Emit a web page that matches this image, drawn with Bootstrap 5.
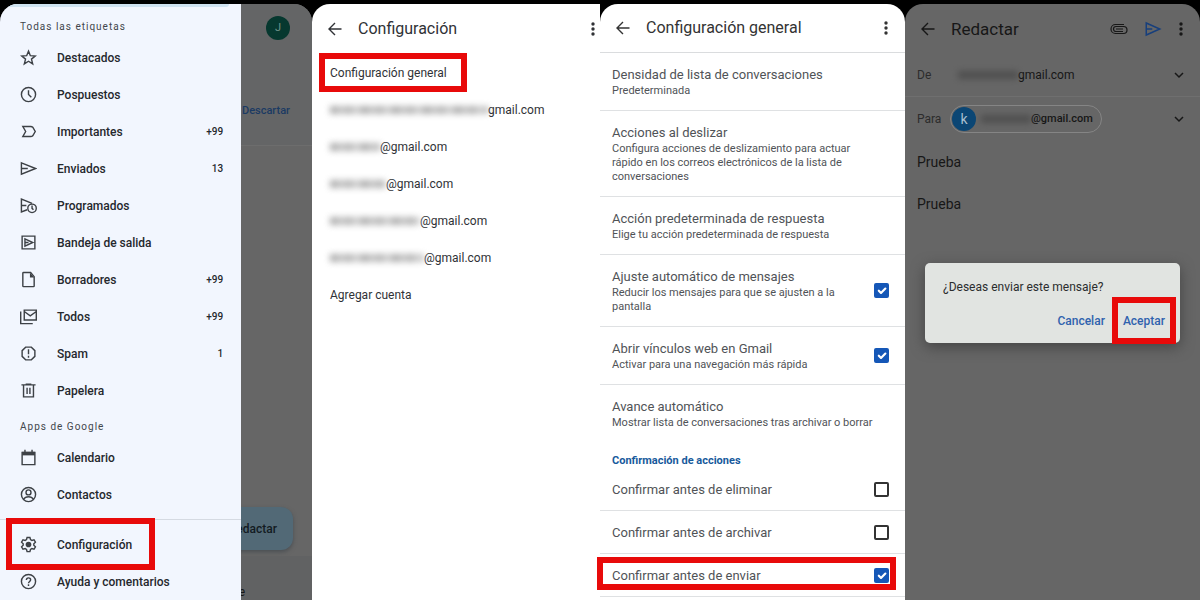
<!DOCTYPE html>
<html lang="es">
<head>
<meta charset="utf-8">
<meta name="viewport" content="width=device-width, initial-scale=1">
<title>Confirmar antes de enviar en Gmail</title>
<link href="https://cdn.jsdelivr.net/npm/bootstrap@5.3.0/dist/css/bootstrap.min.css" rel="stylesheet">
<style>
body{background:#000;font-family:Roboto,"Liberation Sans",sans-serif;font-size:12px;line-height:16px;color:#303236}
a{color:inherit;text-decoration:none}
h1,h2,p{margin:0;font-weight:400}
button{font-family:inherit}
svg{fill:none;stroke:currentColor;stroke-width:2;flex:none;display:block}
.solid{fill:currentColor;stroke:none}
.screens{display:grid;grid-template-columns:312fr 288fr 305fr 295fr;min-height:100vh;padding-top:4px;overflow:hidden}
.screen{position:relative;min-width:0;border-radius:18px 18px 0 0;background:#fff}
.screen-cut{border-top-right-radius:0}
.dim{background:#666;color:#171717}

/* red marker drawn around a control */
.marked{position:relative}
.marked::after{content:"";position:absolute;border:6px solid #e80a0a;pointer-events:none}
.mark-menu::after{inset:-8px 86px -7px 6px}
.mark-general::after{inset:-1px auto -1px 7px;width:148px}
.mark-send::after{inset:3px 9px 6px -3px}
.mark-ok::after{inset:-16px -11px -15px}

/* drawer */
.drawer{position:relative;width:calc(77% + 1px);min-height:100%;background:#f2f6fe;color:#25282d;border-top-left-radius:18px;overflow:hidden}
.drawer-peek{position:absolute;top:0;left:0;right:12px;height:3px;background:#cfe3f1;border-bottom-right-radius:8px}
.drawer-title{font-size:10px;letter-spacing:1px;color:#42464c;margin-bottom:4px;padding-left:20px}
.drawer-top{padding-top:15px}
.drawer-apps{padding-top:10px}
.entry{display:flex;align-items:center;height:37px;padding:0 18px 0 20px;font-weight:500}
.entry svg{margin-right:20px;color:#3d4146}
.entry small{margin-left:auto;font-size:10px}
.rule{height:1px;background:#d5dae2;margin:6px 0}
.behind{position:absolute;inset:0;overflow:hidden;border-radius:18px 18px 0 0}
.behind-head{height:142px;padding:12px 22px 0 0;background:#646566;border-bottom:1px solid #6d6d6d}
.face{width:24px;height:24px;border-radius:50%;background:#06382f;color:#6f9389;font-size:11px}
.discard{color:#1b3a63;font-size:11px;font-weight:500;margin-top:63px}
.compose{width:110px;height:43px;margin-right:19px;padding:0 16px 0 0;border:0;border-radius:12px;background:#526976;color:#131b22;font-size:12px;font-weight:500;text-align:right;box-shadow:0 2px 4px #4a4f53}
.behind-foot{height:44px;background:#616263;margin-top:6px;padding:28px 67px 0 0;text-align:right}

/* top bars and account list */
.topbar{display:flex;align-items:center;height:50px}
.topbar button{border:0;background:none;padding:0;color:inherit}
.topbar h1{font-size:16px;line-height:20px;margin-right:auto}
.accounts{padding-left:14px}
.accounts a{display:flex;align-items:center;height:37px;padding-left:4px}
.veil{display:inline-block;height:8px;filter:blur(3px);opacity:.6;background:repeating-linear-gradient(90deg,#777 0 7px,#999 7px 16px,#808080 16px 22px,#aaa 22px 31px)}
.general a{margin-left:-14px;padding-left:18px}

/* general settings */
.settings{color:#505357}
.settings .topbar{height:49px;border-bottom:1px solid #dadcde;color:#333}
.option{display:flex;align-items:center;justify-content:space-between;border-bottom:1px solid #dfe1e3;padding:12px 16px 12px 12px;color:#505357}
.option .name{font-size:13px;line-height:19px}
.option .note{display:block;font-size:11px;line-height:14px}
.option .text{max-width:254px}
.option-last{border:0}
.option-row{height:43px;padding-top:0;padding-bottom:0}
.group{color:#175a9c;font-size:11px;font-weight:700;line-height:14px;padding:12px 0 0 12px}
.form-check-input.tick{width:15px;height:15px;margin:0;border:2px solid #333;border-radius:2px;flex:none;box-shadow:none}
.form-check-input.tick:checked{background-color:#1557b7;border-color:#1557b7;background-size:14px 14px}

/* compose screen */
.compose-head h1{font-size:17px}
.field{display:flex;align-items:center;height:43px;padding:0 15px 0 12px}
.field-from{border-bottom:1px solid #6f6f6f}
.field-label{width:41px;color:#2c2c2c}
.chip{display:flex;align-items:center;height:28px;margin-left:-8px;padding:0 8px 0 1px;border:1px solid #858585;border-radius:14px;font-size:11px;font-weight:500}
.chip b{width:24px;height:24px;border-radius:50%;background:#0b4674;color:#a9bfd0;font-weight:400;font-size:14px;margin-right:5px}
.dim .veil{background:#404040}
.body-line{font-size:14px;line-height:42px;padding-left:12px}
.body-first{padding-top:1px}
.veil-layer{position:absolute;inset:0;display:flex;align-items:center;padding:2px 20px 0}
.ask{width:100%;height:80px;border-radius:5px;background:#e1e4e1;color:#2b2d2e;padding:16px 15px 0 18px;box-shadow:0 4px 14px #444}
.ask-actions{display:flex;justify-content:flex-end;gap:18px;margin-top:18px}
.ask button{border:0;background:none;padding:0;color:#2f62ae;font-size:12px;font-weight:500;line-height:16px}
</style>
</head>
<body>
<svg class="d-none" aria-hidden="true">
  <symbol id="back" viewBox="0 0 14 14"><path stroke-width="1.400" d="M13.500 7H1.500M7 1L1 7l6 6"/></symbol>
  <symbol id="more" viewBox="0 0 6 16"><circle cx="3" cy="3" r="1.700"/><circle cx="3" cy="8" r="1.700"/><circle cx="3" cy="13" r="1.700"/></symbol>
  <symbol id="send" viewBox="0 0 24 24"><path d="M3 4l18 8-18 8zM3 12h8"/></symbol>
  <symbol id="down" viewBox="0 0 12 12"><path stroke-width="1.500" d="M2 4l4 4 4-4"/></symbol>
</svg>

<main class="screens">
  <section class="screen dim">
    <div class="behind d-flex flex-column">
      <div class="behind-head d-flex flex-column align-items-end">
        <span class="face d-flex align-items-center justify-content-center">J</span>
        <a class="discard" href="#">Descartar</a>
      </div>
      <button class="compose mt-auto ms-auto" type="button">Redactar</button>
      <div class="behind-foot">e</div>
    </div>
    <nav class="drawer">
      <div class="drawer-peek"></div>
      <div class="drawer-title drawer-top">Todas las etiquetas</div>
      <a class="entry" href="#"><svg width="17" height="17" viewBox="0 0 24 24"><path d="M12 3l2.600 6.400 6.900.5-5.300 4.400 1.700 6.700L12 17.300 6.100 21l1.700-6.700-5.300-4.400 6.900-.5z"/></svg>Destacados</a>
      <a class="entry" href="#"><svg width="17" height="17" viewBox="0 0 24 24"><circle cx="12" cy="12" r="10"/><path d="M12 6v6l4 4"/></svg>Pospuestos</a>
      <a class="entry" href="#"><svg width="17" height="17" viewBox="0 0 24 24"><path d="M4 5h11q2 0 3 1l3.500 6-3.500 6q-1 1-3 1H4l4-7z"/></svg>Importantes<small>+99</small></a>
      <a class="entry" href="#"><svg width="17" height="17" viewBox="0 0 24 24"><path d="M2 4l20 8-20 8zM2 12h9"/></svg>Enviados<small>13</small></a>
      <a class="entry" href="#"><svg width="17" height="17" viewBox="0 0 24 24"><path d="M10 18l-8 3V3l15 6M2 12h7"/><circle cx="17" cy="16" r="6"/><path d="M17 12v4l2 2"/></svg>Programados</a>
      <a class="entry" href="#"><svg width="17" height="17" viewBox="0 0 24 24"><path d="M3 3h18v18H3zM7 7l11 5-11 5zM7 12h5"/></svg>Bandeja de salida</a>
      <a class="entry" href="#"><svg width="17" height="17" viewBox="0 0 24 24"><path d="M5 2h10l5 6v13q0 1-1 1H5q-1 0-1-1V3q0-1 1-1z"/><path class="solid" d="M14 2l6 7h-6z"/></svg>Borradores<small>+99</small></a>
      <a class="entry" href="#"><svg width="17" height="17" viewBox="0 0 24 24"><path d="M6 3h17v14H6zM6 5l8.500 6L23 5M1 5v17h17"/></svg>Todos<small>+99</small></a>
      <a class="entry" href="#"><svg width="17" height="17" viewBox="0 0 24 24"><path d="M8 3h8l5 5v8l-5 5H8l-5-5V8zM12 6v7M12 15v3"/></svg>Spam<small>1</small></a>
      <a class="entry" href="#"><svg width="17" height="17" viewBox="0 0 24 24"><path d="M2 4h20M8 3h8M5 4v17h14V4M10 8v9M14 8v9"/></svg>Papelera</a>
      <div class="drawer-title drawer-apps">Apps de Google</div>
      <a class="entry" href="#"><svg width="17" height="17" viewBox="0 0 24 24"><path d="M3 5h18v17H3zM7 1v4M17 1v4"/><path class="solid" d="M3 4h18v5H3z"/></svg>Calendario</a>
      <a class="entry" href="#"><svg width="17" height="17" viewBox="0 0 24 24"><circle cx="12" cy="12" r="10"/><circle cx="12" cy="9" r="3.500"/><path d="M5 19c3-5 11-5 14 0"/></svg>Contactos</a>
      <div class="rule"></div>
      <a class="entry marked mark-menu" href="#"><svg width="17" height="17" viewBox="0 0 24 24"><path d="M10 2h4l.8 3 2 1.200 3-.9 2 3.400L19.500 11v2l2.300 2.300-2 3.400-3-.9-2 1.200-.8 3h-4l-.8-3-2-1.200-3 .9-2-3.400L4.500 13v-2L2.200 8.700l2-3.400 3 .9 2-1.200z"/><circle class="solid" cx="12" cy="12" r="4"/></svg>Configuración</a>
      <a class="entry" href="#"><svg width="17" height="17" viewBox="0 0 24 24"><circle cx="12" cy="12" r="10"/><path d="M9 10c0-4 6-4 6-.5 0 2.500-3 2.500-3 5M12 16v2.500"/></svg>Ayuda y comentarios</a>
    </nav>
  </section>

  <section class="screen screen-cut">
    <header class="topbar ps-3 pe-1">
      <button type="button" aria-label="Atrás" class="me-3"><svg width="14" height="14"><use href="#back"/></svg></button>
      <h1>Configuración</h1>
      <button type="button" aria-label="Más"><svg class="solid" width="6" height="16"><use href="#more"/></svg></button>
    </header>
    <div class="general accounts"><a class="marked mark-general" href="#">Configuración general</a></div>
    <div class="accounts">
      <a href="#"><span class="veil" style="width:158px"></span>gmail.com</a>
      <a href="#"><span class="veil" style="width:50px"></span>@gmail.com</a>
      <a href="#"><span class="veil" style="width:56px"></span>@gmail.com</a>
      <a href="#"><span class="veil" style="width:90px"></span>@gmail.com</a>
      <a href="#"><span class="veil" style="width:94px"></span>@gmail.com</a>
      <a href="#">Agregar cuenta</a>
    </div>
  </section>

  <section class="screen settings">
    <header class="topbar ps-3 pe-3">
      <button type="button" aria-label="Atrás" class="me-3"><svg width="14" height="14"><use href="#back"/></svg></button>
      <h1>Configuración general</h1>
      <button type="button" aria-label="Más" class="me-n1"><svg class="solid" width="6" height="16"><use href="#more"/></svg></button>
    </header>
    <a class="option" href="#"><span><span class="name">Densidad de lista de conversaciones</span><span class="note">Predeterminada</span></span></a>
    <a class="option" href="#"><span class="text"><span class="name">Acciones al deslizar</span><span class="note">Configura acciones de deslizamiento para actuar rápido en los correos electrónicos de la lista de conversaciones</span></span></a>
    <a class="option" href="#"><span><span class="name">Acción predeterminada de respuesta</span><span class="note">Elige tu acción predeterminada de respuesta</span></span></a>
    <label class="option" for="fit"><span class="text"><span class="name">Ajuste automático de mensajes</span><span class="note">Reducir los mensajes para que se ajusten a la pantalla</span></span><input class="form-check-input tick" type="checkbox" id="fit" checked></label>
    <label class="option" for="links"><span class="text"><span class="name">Abrir vínculos web en Gmail</span><span class="note">Activar para una navegación más rápida</span></span><input class="form-check-input tick" type="checkbox" id="links" checked></label>
    <a class="option option-last" href="#"><span><span class="name">Avance automático</span><span class="note">Mostrar lista de conversaciones tras archivar o borrar</span></span></a>
    <h2 class="group">Confirmación de acciones</h2>
    <label class="option option-row" for="del"><span class="name">Confirmar antes de eliminar</span><input class="form-check-input tick" type="checkbox" id="del"></label>
    <label class="option option-row" for="arc"><span class="name">Confirmar antes de archivar</span><input class="form-check-input tick" type="checkbox" id="arc"></label>
    <label class="option option-row marked mark-send" for="snd"><span class="name">Confirmar antes de enviar</span><input class="form-check-input tick" type="checkbox" id="snd" checked></label>
  </section>

  <section class="screen dim">
    <header class="topbar compose-head ps-3 pe-3">
      <button type="button" aria-label="Atrás" class="me-3"><svg width="14" height="14"><use href="#back"/></svg></button>
      <h1>Redactar</h1>
      <button type="button" aria-label="Adjuntar" class="me-3"><svg width="18" height="12" viewBox="0 0 18 12"><path stroke-width="1.200" d="M13 8.500H6a2.200 2.200 0 010-5h7.500a3 3 0 010 7H5.500a4.500 4.500 0 010-9H14M13 6H6"/></svg></button>
      <button type="button" aria-label="Enviar" class="me-3"><svg width="18" height="18" color="#173f7c"><use href="#send"/></svg></button>
      <button type="button" aria-label="Más" class="me-n1"><svg class="solid" width="6" height="16"><use href="#more"/></svg></button>
    </header>
    <div class="field field-from"><span class="field-label">De</span><span class="veil" style="width:60px"></span>gmail.com<svg class="ms-auto" width="12" height="12"><use href="#down"/></svg></div>
    <div class="field"><span class="field-label">Para</span><span class="chip"><b class="d-flex align-items-center justify-content-center">k</b><span class="veil" style="width:50px"></span>@gmail.com</span><svg class="ms-auto" width="12" height="12"><use href="#down"/></svg></div>
    <p class="body-line body-first">Prueba</p>
    <p class="body-line">Prueba</p>
    <div class="veil-layer">
      <div class="ask" role="dialog" aria-labelledby="ask-title">
        <p id="ask-title">¿Deseas enviar este mensaje?</p>
        <div class="ask-actions">
          <button type="button">Cancelar</button>
          <button type="button" class="marked mark-ok">Aceptar</button>
        </div>
      </div>
    </div>
  </section>
</main>
<script src="https://cdn.jsdelivr.net/npm/bootstrap@5.3.0/dist/js/bootstrap.bundle.min.js"></script>
</body>
</html>
